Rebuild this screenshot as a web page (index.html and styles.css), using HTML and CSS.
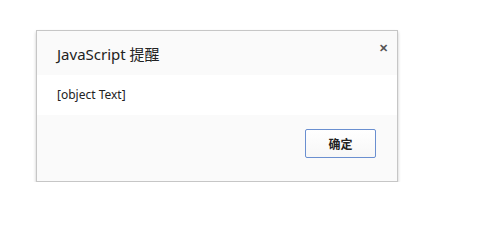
FILE: index.html
```html
<!DOCTYPE html>
<html>
<head>
<meta charset="utf-8">
<link rel="stylesheet" href="styles.css">
</head>
<body>
<div class="dialog">
  <div class="header">
    <span class="title">JavaScript 提醒</span>
    <span class="close">&#x2715;</span>
  </div>
  <div class="message">[object Text]</div>
  <div class="footer">
    <button class="ok">确定</button>
  </div>
</div>
</body>
</html>
```

FILE: styles.css
```css
html, body {
  margin: 0;
  padding: 0;
  background: #ffffff;
}
body {
  padding: 30px 0 0 36px;
  font-family: "Noto Sans", "Noto Sans CJK SC", sans-serif;
  color: #222;
}
.dialog {
  width: 360px;
  border: 1px solid #c6c6c6;
  box-shadow: 0 2px 3px rgba(0,0,0,0.22);
  background: #fafafa;
}
.header {
  height: 44px;
  display: flex;
  justify-content: space-between;
  align-items: flex-start;
  padding: 0 9px 0 20px;
  background: #fafafa;
}
.title {
  font-size: 15px;
  line-height: 20px;
  height: 20px;
  margin-top: 13px;
  color: #222;
}
.close {
  font-size: 11px;
  line-height: 11px;
  margin-top: 11px;
  color: #555;
  font-weight: bold;
}
.message {
  height: 40px;
  padding-left: 20px;
  background: #ffffff;
  font-size: 12px;
  line-height: 16px;
  display: flex;
  align-items: center;
  color: #222;
}
.footer {
  height: 66px;
  display: flex;
  justify-content: flex-end;
  align-items: flex-start;
  padding-right: 21px;
  background: #fafafa;
}
.ok {
  margin-top: 14px;
  width: 71px;
  height: 29px;
  border: 1px solid #6a8fd0;
  border-radius: 2px;
  background: linear-gradient(#ffffff, #f7f7f7);
  font-family: "Noto Sans CJK SC", sans-serif;
  font-size: 12px;
  font-weight: bold;
  color: #222;
  padding: 0;
}
```
